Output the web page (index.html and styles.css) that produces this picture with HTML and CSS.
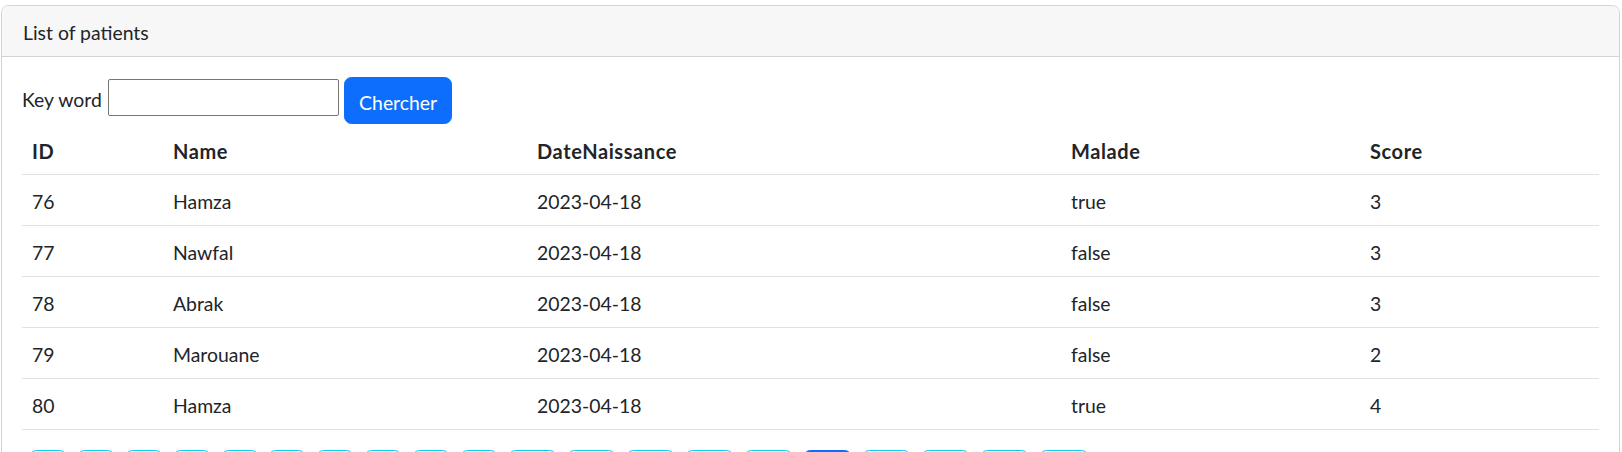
FILE: index.html
```html
<!DOCTYPE html>
<html lang="en">
<head>
<meta charset="utf-8">
<title>Patients</title>
<link rel="stylesheet" href="styles.css">
</head>
<body>
<div class="card">
  <div class="card-header">List of patients</div>
  <div class="card-body">
    <form class="search">
      <label class="search-label">Key word</label>
      <input class="search-input" type="text">
      <button class="btn btn-primary" type="button">Chercher</button>
    </form>
    <table class="table">
      <colgroup>
        <col class="c-id"><col class="c-name"><col class="c-date"><col class="c-malade"><col>
      </colgroup>
      <thead>
        <tr><th>ID</th><th>Name</th><th>DateNaissance</th><th>Malade</th><th>Score</th></tr>
      </thead>
      <tbody>
        <tr><td>76</td><td>Hamza</td><td>2023-04-18</td><td>true</td><td>3</td></tr>
        <tr><td>77</td><td>Nawfal</td><td>2023-04-18</td><td>false</td><td>3</td></tr>
        <tr><td>78</td><td>Abrak</td><td>2023-04-18</td><td>false</td><td>3</td></tr>
        <tr><td>79</td><td>Marouane</td><td>2023-04-18</td><td>false</td><td>2</td></tr>
        <tr><td>80</td><td>Hamza</td><td>2023-04-18</td><td>true</td><td>4</td></tr>
      </tbody>
    </table>
    <ul class="pages">
      <li><a class="page-btn">0</a></li>
      <li><a class="page-btn">1</a></li>
      <li><a class="page-btn">2</a></li>
      <li><a class="page-btn">3</a></li>
      <li><a class="page-btn">4</a></li>
      <li><a class="page-btn">5</a></li>
      <li><a class="page-btn">6</a></li>
      <li><a class="page-btn">7</a></li>
      <li><a class="page-btn">8</a></li>
      <li><a class="page-btn">9</a></li>
      <li><a class="page-btn">10</a></li>
      <li><a class="page-btn">11</a></li>
      <li><a class="page-btn">12</a></li>
      <li><a class="page-btn">13</a></li>
      <li><a class="page-btn">14</a></li>
      <li><a class="page-btn active">15</a></li>
      <li><a class="page-btn">16</a></li>
      <li><a class="page-btn">17</a></li>
      <li><a class="page-btn">18</a></li>
      <li><a class="page-btn">19</a></li>
    </ul>
  </div>
</div>
</body>
</html>
```
FILE: styles.css
```css
* { box-sizing: border-box; }
html, body { margin: 0; padding: 0; background: #fff; }
body {
  font-family: Lato, "Open Sans", sans-serif;
  font-size: 19.4px;
  line-height: 30px;
  color: #212529;
}
.card {
  margin: 5px 2px 0 1px;
  border: 1px solid #d3d3d3;
  border-radius: 7.5px;
  background: #fff;
}
.card-header {
  padding: 11.5px 21px 8.5px;
  background: #f7f7f7;
  border-bottom: 1px solid #d3d3d3;
  border-radius: 6.5px 6.5px 0 0;
}
.card-body { padding: 20px; }
.search { display: flex; align-items: flex-start; margin: 0; }
.search-label { margin-top: 8px; margin-right: 6px; }
.search-input {
  width: 231px;
  height: 37px;
  margin-top: 1.5px;
  margin-right: 5px;
  border: 1px solid #767676;
  border-radius: 2px;
  font: inherit;
  padding: 1px 3px;
}
.btn {
  display: inline-block;
  padding: 9.5px 14.3px 5.5px;
  border: 1px solid transparent;
  border-radius: 7.5px;
  font: inherit;
  line-height: 30px;
}
.btn-primary { background: #0d6efd; border-color: #0d6efd; color: #fff; }
.table {
  width: 100%;
  border-collapse: collapse;
  table-layout: fixed;
  margin: 0 0 20px;
}
.c-id { width: 141px; }
.c-name { width: 364px; }
.c-date { width: 534px; }
.c-malade { width: 299px; }
.table th, .table td {
  padding: 12px 10px 8px;
  text-align: left;
  border-bottom: 1px solid #dee2e6;
  vertical-align: top;
}
.table th { font-weight: 700; font-size: 20px; letter-spacing: 0.6px; }
.pages {
  list-style: none;
  margin: 0;
  padding: 0 0 0 7.3px;
  display: flex;
  gap: 9.8px;
}
.page-btn {
  display: block;
  padding: 7.5px 12.4px;
  border: 1px solid #0dcaf0;
  border-radius: 7.5px;
  color: #0dcaf0;
  line-height: 30px;
}
.page-btn.active { background: #0d6efd; border-color: #0d6efd; color: #fff; }
```
